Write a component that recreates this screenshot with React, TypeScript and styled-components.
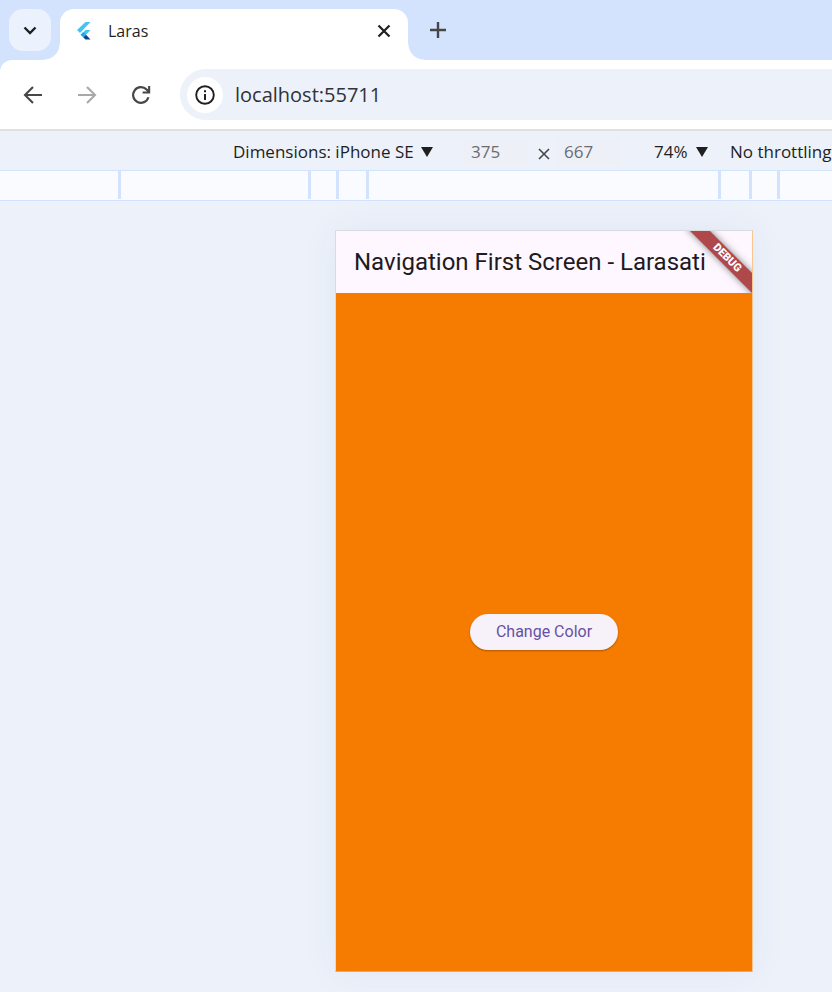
import React from "react";
import styled, { createGlobalStyle } from "styled-components";

const uiFont = `"Open Sans", "Noto Sans", sans-serif`;
const appFont = `Roboto, "Liberation Sans", sans-serif`;

const GlobalStyle = createGlobalStyle`
  *, *::before, *::after { box-sizing: border-box; }
  body { margin: 0; background: #ecf1fa; }
  button, input, select { font: inherit; color: inherit; border: 0; margin: 0; padding: 0; background: none; }
  svg { display: block; }
`;

const Page = styled.div`
  min-height: 100vh;
  display: flex;
  flex-direction: column;
  overflow: hidden;
  background: #ecf1fa;
  color: #1f1f1f;
  font-family: ${uiFont};
`;

const TabStrip = styled.header`
  display: flex;
  height: 60px;
  padding: 9px 9px 0;
  gap: 9px;
  background: #d3e2fd;
`;

const IconButton = styled.button<{ $size: number; $fill?: string; $radius?: string }>`
  flex: none;
  width: ${(p) => p.$size}px;
  height: ${(p) => p.$size}px;
  display: grid;
  place-items: center;
  border-radius: ${(p) => p.$radius ?? "50%"};
  background: ${(p) => p.$fill ?? "transparent"};
`;

const Tab = styled.div`
  position: relative;
  display: flex;
  align-items: center;
  flex: 0 1 348px;
  min-width: 0;
  padding: 0 9px 8px 15px;
  border-radius: 14px 14px 0 0;
  background: #fff;

  &::before,
  &::after {
    content: "";
    position: absolute;
    bottom: 0;
    width: 16px;
    height: 16px;
  }
  &::before {
    right: 100%;
    background: radial-gradient(circle at 0 0, transparent 15px, #fff 16px);
  }
  &::after {
    left: 100%;
    background: radial-gradient(circle at 100% 0, transparent 15px, #fff 16px);
  }
`;

const TabTitle = styled.span`
  flex: 1;
  padding-left: 13px;
  font-size: 16px;
  line-height: 24px;
`;

const BarBacking = styled.div`
  background: #d3e2fd;
`;

const Toolbar = styled.nav`
  display: flex;
  align-items: center;
  height: 71px;
  padding-left: 15px;
  gap: 18px;
  border-bottom: 2px solid #e0e1e3;
  border-radius: 12px 0 0 0;
  background: #fff;
`;

const AddressBar = styled.div`
  flex: 1;
  display: flex;
  align-items: center;
  gap: 12px;
  height: 51px;
  margin-left: 3px;
  padding-left: 7px;
  border-radius: 26px 0 0 26px;
  background: #ecf1fa;
`;

const AddressInput = styled.input`
  flex: 1;
  min-width: 0;
  font-size: 20px;
  line-height: 28px;
  color: #303236;
  outline: none;
`;

const DeviceBar = styled.div`
  display: flex;
  align-items: center;
  height: 39px;
  padding: 2px 0 0 233px;
  font-size: 17px;
  line-height: 24px;
  white-space: nowrap;
`;

const MenuBox = styled.label<{ $width: number; $after: number }>`
  flex: none;
  display: grid;
  align-items: center;
  width: ${(p) => p.$width}px;
  margin-right: ${(p) => p.$after}px;

  & > * {
    grid-area: 1 / 1;
  }
  & > svg {
    justify-self: end;
    pointer-events: none;
  }
`;

const Menu = styled.select`
  appearance: none;
  width: 100%;
  height: 24px;
  outline: none;
`;

const SizeInput = styled.input`
  flex: none;
  width: 64px;
  height: 26px;
  padding-left: 8px;
  border-radius: 4px;
  background: #eef0f7;
  color: #6a6c70;
  outline: none;
`;

const Times = styled.span`
  flex: none;
  width: 29px;
  display: grid;
  place-items: center;
  padding: 5px 0 0 5px;
`;

const SizeGroup = styled.div`
  flex: none;
  display: flex;
  margin-right: 34px;
`;

const Ruler = styled.div`
  display: flex;
  height: 31px;
  padding-bottom: 1px;
  border: solid #d3e2fd;
  border-width: 1px 0;
  background: #f9fbff;
`;

const RulerStep = styled.div<{ $width: number }>`
  flex: none;
  width: ${(p) => p.$width}px;
  border-right: 3px solid #d3e2fd;
`;

const Viewport = styled.main`
  flex: 1;
  display: flex;
  justify-content: center;
  padding: 29px 0 20px 256px;
`;

const Phone = styled.section`
  position: relative;
  display: flex;
  flex-direction: column;
  width: 100%;
  max-width: 418px;
  border: 1px solid;
  border-color: #d9dbe0 #fbc591 #f9a34c #d9dbe0;
  box-shadow: 0 0 36px rgba(60, 80, 120, 0.06);
  font-family: ${appFont};
`;

const AppBar = styled.div`
  display: flex;
  align-items: center;
  height: 62px;
  padding-left: 18px;
  background: #fef7ff;
`;

const AppTitle = styled.h1`
  margin: 0;
  font-size: 24px;
  line-height: 32px;
  font-weight: 400;
  color: #1d1b20;
  white-space: nowrap;
`;

const AppBody = styled.div`
  flex: 1;
  display: grid;
  place-items: center;
  background: #f67c01;
`;

const ChangeButton = styled.button`
  width: 148px;
  height: 36px;
  border-radius: 18px;
  background: #f7f2fa;
  box-shadow: 0 1px 2px rgba(0, 0, 0, 0.3);
  color: #6750a4;
  font-size: 16px;
  line-height: 20px;
  font-weight: 400;
`;

const BannerCorner = styled.div`
  position: absolute;
  top: 0;
  right: 0;
  width: 80px;
  height: 62px;
  overflow: hidden;
  pointer-events: none;
`;

const Banner = styled.span`
  position: absolute;
  top: 20px;
  right: -25px;
  width: 100px;
  height: 14px;
  transform: rotate(45deg);
  background: #ae484b;
  box-shadow: 0 0 7px rgba(0, 0, 0, 0.5);
  color: #fff;
  font-size: 11px;
  line-height: 14px;
  font-weight: 900;
  text-align: center;
`;

const FlutterLogo = () => (
  <svg width="20" height="20" viewBox="0 0 20 20" aria-hidden="true">
    <path d="M10.5 1H15.5L5 12L2 9Z" fill="#42c4f7" />
    <path d="M10.5 9H15.5L11 13.7L6 13.7Z" fill="#42c4f7" />
    <path d="M8.2 16.3L11 13.7L15.5 18.5H10.5Z" fill="#0b3f94" />
    <path d="M5.5 13.7L8.2 11L11 13.7L8.2 16.3Z" fill="#1fa6ee" />
  </svg>
);

const Stroke = ({ d, size, color = "#474747", width = 2 }: { d: string; size: number; color?: string; width?: number }) => (
  <svg width={size} height={size} viewBox={`0 0 ${size} ${size}`} fill="none" stroke={color} strokeWidth={width} aria-hidden="true">
    <path d={d} />
  </svg>
);

const Triangle = () => (
  <svg width="12" height="10" viewBox="0 0 12 10" aria-hidden="true">
    <path d="M0 0H12L6 10Z" fill="#1f1f1f" />
  </svg>
);

const InfoIcon = () => (
  <svg width="20" height="20" viewBox="0 0 20 20" aria-hidden="true">
    <circle cx="10" cy="10" r="8.8" fill="none" stroke="#1f1f1f" strokeWidth="1.9" />
    <path d="M9 9H11V15H9ZM9 5.3H11V7.3H9Z" fill="#1f1f1f" />
  </svg>
);

const ReloadIcon = () => (
  <svg width="20" height="20" viewBox="0 0 20 20" aria-hidden="true">
    <path d="M17.4 12.2A7.8 7.8 0 1 1 15.6 4.6L17.6 6.8" fill="none" stroke="#474747" strokeWidth="2.2" />
    <path d="M19.2 1V8.6H11.6V6.4H17.1V1Z" fill="#474747" />
  </svg>
);

const rulerSteps = [121, 190, 28, 30, 352, 31, 28];

export default function App() {
  return (
    <Page>
      <GlobalStyle />
      <TabStrip>
        <IconButton $size={42} $fill="#ebf2fe" $radius="14px" aria-label="Search tabs">
          <Stroke size={14} d="M1.5 4.5L7 10L12.5 4.5" color="#1f1f1f" width={2.4} />
        </IconButton>
        <Tab>
          <FlutterLogo />
          <TabTitle>Laras</TabTitle>
          <IconButton $size={30} aria-label="Close tab">
            <Stroke size={14} d="M1.5 1.5L12.5 12.5M12.5 1.5L1.5 12.5" color="#1f1f1f" width={2.2} />
          </IconButton>
        </Tab>
        <IconButton $size={42} aria-label="New tab">
          <Stroke size={16} d="M8 0V16M0 8H16" width={2.4} />
        </IconButton>
      </TabStrip>

      <BarBacking>
        <Toolbar>
          <IconButton $size={36} aria-label="Back">
            <Stroke size={20} d="M19 10H2.5M10 2L2 10L10 18" width={2.1} />
          </IconButton>
          <IconButton $size={36} aria-label="Forward" disabled>
            <Stroke size={20} d="M1 10H17.5M10 2L18 10L10 18" color="#a9a9a9" width={2.1} />
          </IconButton>
          <IconButton $size={36} aria-label="Reload">
            <ReloadIcon />
          </IconButton>
          <AddressBar>
            <IconButton $size={36} $fill="#fff" aria-label="Site information">
              <InfoIcon />
            </IconButton>
            <AddressInput aria-label="Address" defaultValue="localhost:55711" />
          </AddressBar>
        </Toolbar>
      </BarBacking>

      <DeviceBar>
        <MenuBox $width={200} $after={30}>
          <Menu aria-label="Device">
            <option>Dimensions: iPhone SE</option>
          </Menu>
          <Triangle />
        </MenuBox>
        <SizeGroup>
          <SizeInput aria-label="Width" defaultValue="375" />
          <Times>
            <Stroke size={12} d="M1 1L11 11M11 1L1 11" width={1.6} />
          </Times>
          <SizeInput aria-label="Height" defaultValue="667" />
        </SizeGroup>
        <MenuBox $width={54} $after={22}>
          <Menu aria-label="Zoom">
            <option>74%</option>
          </Menu>
          <Triangle />
        </MenuBox>
        <MenuBox $width={130} $after={0}>
          <Menu aria-label="Throttling">
            <option>No throttling</option>
          </Menu>
          <Triangle />
        </MenuBox>
      </DeviceBar>

      <Ruler>
        {rulerSteps.map((width, i) => (
          <RulerStep key={i} $width={width} />
        ))}
      </Ruler>

      <Viewport>
        <Phone>
          <AppBar>
            <AppTitle>Navigation First Screen - Larasati</AppTitle>
          </AppBar>
          <AppBody>
            <ChangeButton>Change Color</ChangeButton>
          </AppBody>
          <BannerCorner>
            <Banner>DEBUG</Banner>
          </BannerCorner>
        </Phone>
      </Viewport>
    </Page>
  );
}
